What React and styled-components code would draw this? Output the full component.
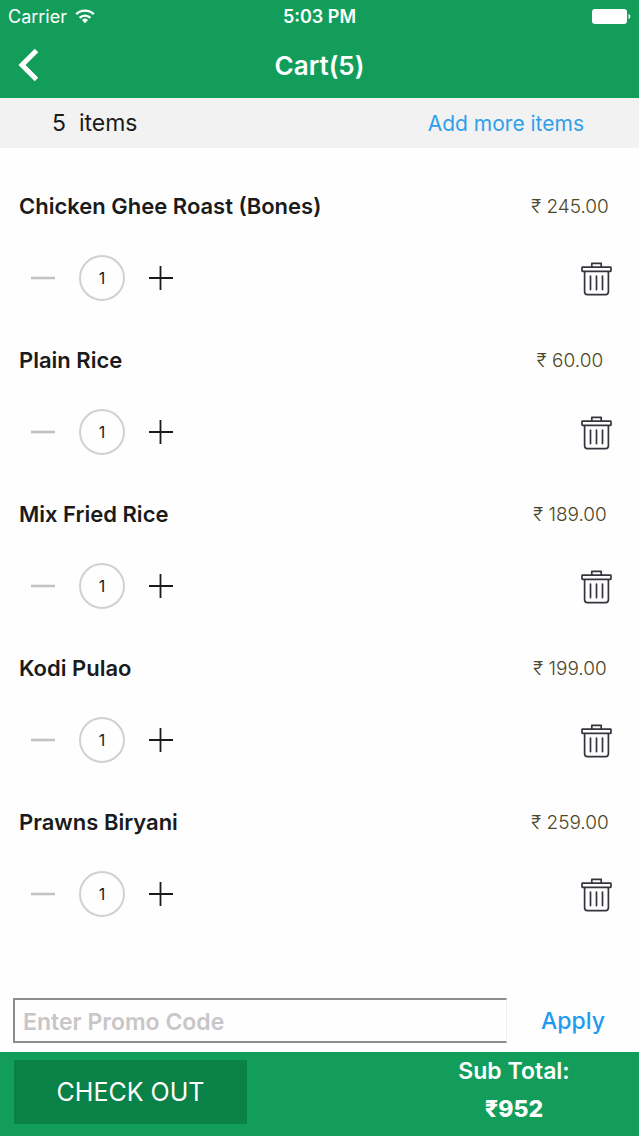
import React, { useState } from 'react';
import styled, { createGlobalStyle } from 'styled-components';

const GlobalStyle = createGlobalStyle`
  * {
    box-sizing: border-box;
  }
  body {
    margin: 0;
    background: #fefefe;
    font-family: Inter, 'Noto Sans', sans-serif;
    color: #1b1b1b;
  }
  button, input {
    font-family: inherit;
    padding: 0;
    border: 0;
    background: none;
    color: inherit;
  }
  button {
    cursor: pointer;
  }
`

const Page = styled.div`
  display: flex;
  flex-direction: column;
  min-height: 100vh;
`
const Header = styled.header`
  background: #129e5a;
  color: #fff;
`
const StatusBar = styled.div`
  display: grid;
  grid-template-columns: 1fr auto 1fr;
  align-items: center;
  height: 32px;
  padding: 0 8px;
`
const Carrier = styled.div`
  display: flex;
  align-items: center;
  gap: 8px;
  font-size: 18px;
`
const Clock = styled.div`
  font-size: 18px;
  font-weight: 600;
`
const Battery = styled.svg`
  justify-self: end;
`
const NavBar = styled.nav`
  display: grid;
  grid-template-columns: 1fr auto 1fr;
  align-items: center;
  height: 66px;
  padding: 0 16px;
`
const BackButton = styled.button`
  display: flex;
  justify-self: start;
`
const Title = styled.h1`
  margin: 0;
  font-size: 26px;
  font-weight: 600;
`
const Summary = styled.div`
  display: flex;
  justify-content: space-between;
  align-items: center;
  height: 50px;
  padding: 0 55px 0 52px;
  background: #f3f2f2;
  font-size: 23px;
`
const Count = styled.span`
  white-space: pre;
`
const AddLink = styled.a`
  color: #2f9fec;
  font-size: 21px;
  text-decoration: none;
`
const List = styled.ul`
  flex: 1;
  margin: 0;
  padding: 0;
  list-style: none;
`
const Item = styled.li`
  display: flex;
  flex-direction: column;
  gap: 35px;
  height: 154px;
  padding: 44px 19px 0;
`
const ItemRow = styled.div`
  display: flex;
  justify-content: space-between;
  align-items: center;
  height: 28px;
`
const Name = styled.span`
  font-size: 22px;
  font-weight: 600;
`
const Price = styled.span`
  width: 100px;
  padding-top: 2px;
  font-size: 19px;
  font-weight: 300;
  text-align: center;
  white-space: nowrap;
  color: #4f4628;
`
const Controls = styled.div`
  display: flex;
  justify-content: space-between;
  align-items: center;
  height: 48px;
  padding: 0 8px 0 12px;
`
const Stepper = styled.div`
  display: flex;
  align-items: center;
  gap: 24px;
`
const Quantity = styled.span`
  display: flex;
  align-items: center;
  justify-content: center;
  width: 46px;
  height: 46px;
  border: 2px solid #d3d0d0;
  border-radius: 50%;
  font-size: 16px;
`
const IconButton = styled.button`
  display: flex;
  color: ${({ $muted }) => ($muted ? '#c4c1c1' : '#1b1b1b')};
`
const PromoForm = styled.form`
  display: flex;
  align-items: center;
  padding: 0 0 9px 13px;
`
const PromoInput = styled.input`
  flex: 1;
  min-width: 0;
  height: 45px;
  padding: 2px 8px 0;
  border: 2px solid #8f8c8d;
  border-right: 1px solid #f0eeee;
  border-radius: 0;
  font-size: 23px;
  font-weight: 600;
  outline: none;

  &::placeholder {
    color: #c9c6c9;
    opacity: 1;
  }
`
const ApplyButton = styled.button`
  width: 132px;
  color: #1e9bf0;
  font-size: 23px;
  font-weight: 500;
`
const Footer = styled.footer`
  display: flex;
  justify-content: space-between;
  align-items: flex-start;
  height: 84px;
  padding-left: 14px;
  background: #129e5a;
  color: #fff;
`
const CheckoutButton = styled.button`
  width: 233px;
  height: 64px;
  margin-top: 8px;
  background: #0a8146;
  font-size: 25px;
`
const Total = styled.div`
  width: 40%;
  font-size: 23px;
  font-weight: 600;
  line-height: 38px;
  text-align: center;
`
const Amount = styled.div`
  font-weight: 800;
`

const Wifi = () => (
  <svg width="20" height="15" viewBox="0 0 20 15" fill="none" stroke="#fff" strokeWidth="2.4">
    <path d="M1.2 5.2a12.6 12.6 0 0 1 17.6 0" />
    <path d="M4.6 8.8a7.8 7.8 0 0 1 10.8 0" />
    <path d="M10 14.2l-3-3.2a4.3 4.3 0 0 1 6 0z" fill="#fff" stroke="none" />
  </svg>
)

const Trash = () => (
  <svg width="31" height="36" viewBox="0 -2 31 36" fill="none" stroke="#35343c" strokeWidth="1.7" strokeLinejoin="round">
    <path d="M10.8 5.2V1.4h9.4v3.8" />
    <rect x="1" y="5.2" width="29" height="4.2" rx="0.6" />
    <path d="M3.6 9.4v20.4c0 1.8 1 2.8 2.8 2.8h18.2c1.8 0 2.8-1 2.8-2.8V9.4" />
    <path d="M9.5 14.2v13.4M15.5 14.2v13.4M21.5 14.2v13.4" strokeLinecap="round" />
  </svg>
)

const dishes = [
  { id: 1, name: 'Chicken Ghee Roast (Bones)', price: 245 },
  { id: 2, name: 'Plain Rice', price: 60 },
  { id: 3, name: 'Mix Fried Rice', price: 189 },
  { id: 4, name: 'Kodi Pulao', price: 199 },
  { id: 5, name: 'Prawns Biryani', price: 259 },
]

function CartItem({ item, onChange, onRemove }) {
  return (
    <Item>
      <ItemRow>
        <Name>{item.name}</Name>
        <Price>₹ {item.price.toFixed(2)}</Price>
      </ItemRow>
      <Controls>
        <Stepper>
          <IconButton
            type="button"
            aria-label={`Remove one ${item.name}`}
            $muted={item.quantity === 1}
            onClick={() => onChange(item.id, -1)}
          >
            <svg width="24" height="24" stroke="currentColor" strokeWidth="2.6">
              <path d="M0 12h24" />
            </svg>
          </IconButton>
          <Quantity>{item.quantity}</Quantity>
          <IconButton type="button" aria-label={`Add one ${item.name}`} onClick={() => onChange(item.id, 1)}>
            <svg width="24" height="24" stroke="currentColor" strokeWidth="1.8">
              <path d="M0 12h24M11.5 0v24" />
            </svg>
          </IconButton>
        </Stepper>
        <IconButton type="button" aria-label={`Delete ${item.name}`} onClick={() => onRemove(item.id)}>
          <Trash />
        </IconButton>
      </Controls>
    </Item>
  )
}

function App() {
  const [items, setItems] = useState(dishes.map((dish) => ({ ...dish, quantity: 1 })))
  const [promo, setPromo] = useState('')

  const changeQuantity = (id, step) => {
    setItems(items.map((item) => (
      item.id === id ? { ...item, quantity: Math.max(1, item.quantity + step) } : item
    )))
  }
  const removeItem = (id) => setItems(items.filter((item) => item.id !== id))
  const total = items.reduce((sum, item) => sum + item.price * item.quantity, 0)

  return (
    <>
      <GlobalStyle />
      <Page>
        <Header>
          <StatusBar>
            <Carrier>Carrier <Wifi /></Carrier>
            <Clock>5:03 PM</Clock>
            <Battery width="39" height="15" viewBox="0 0 39 15" fill="#fff">
              <rect width="35" height="15" rx="3" />
              <path d="M36.5 5c2.4.8 2.4 4.2 0 5z" />
            </Battery>
          </StatusBar>
          <NavBar>
            <BackButton type="button" aria-label="Back">
              <svg width="25" height="34" viewBox="0 0 25 34" fill="none" stroke="#fff" strokeWidth="5">
                <path d="M20.5 2.5L6 17l14.500 14.500" />
              </svg>
            </BackButton>
            <Title>Cart({items.length})</Title>
          </NavBar>
        </Header>
        <Summary>
          <Count>{items.length}{'  items'}</Count>
          <AddLink href="#menu">Add more items</AddLink>
        </Summary>
        <List>
          {items.map((item) => (
            <CartItem key={item.id} item={item} onChange={changeQuantity} onRemove={removeItem} />
          ))}
        </List>
        <PromoForm onSubmit={(e) => e.preventDefault()}>
          <PromoInput
            aria-label="Promo code"
            placeholder="Enter Promo Code"
            value={promo}
            onChange={(e) => setPromo(e.target.value)}
          />
          <ApplyButton type="submit">Apply</ApplyButton>
        </PromoForm>
        <Footer>
          <CheckoutButton type="button">CHECK OUT</CheckoutButton>
          <Total>
            <div>Sub Total:</div>
            <Amount>₹{total}</Amount>
          </Total>
        </Footer>
      </Page>
    </>
  )
}

export default App;
